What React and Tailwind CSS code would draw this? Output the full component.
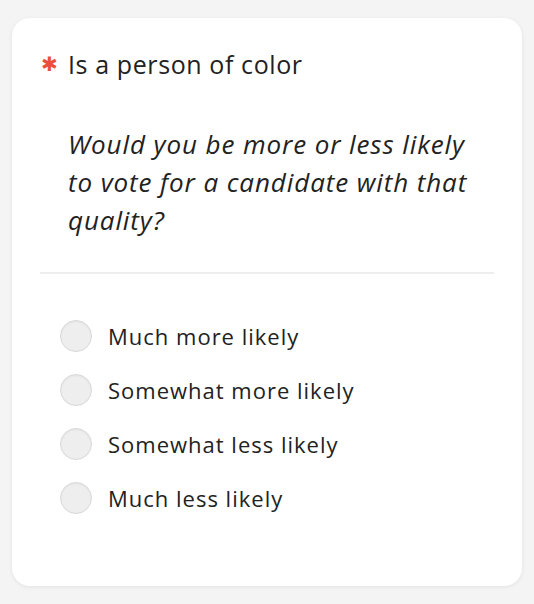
import React from 'react';

const options = ['Much more likely', 'Somewhat more likely', 'Somewhat less likely', 'Much less likely'];

export default function App() {
  return (
    <div className="min-h-[604px] w-[534px] bg-[#f4f4f4] pt-[18px] px-3 pb-[18px]" style={{ fontFamily: '"Open Sans", "Noto Sans", sans-serif' }}>
      <div className="bg-white rounded-[18px] shadow-[0_1px_4px_rgba(0,0,0,0.08)] h-[568px] px-7 pt-[30px]">
        <div className="flex items-center text-[#222] text-[25px] leading-[30px] tracking-[0.6px]">
          <span className="text-[#e8503a] text-[20px] w-[28px] pl-[1px] mt-[1px]" style={{ fontFamily: '"DejaVu Sans", sans-serif' }}>✱</span>
          <span>Is a person of color</span>
        </div>
        <p className="mt-[46px] ml-[28px] w-[412px] italic text-[26px] leading-[38px] text-[#222] tracking-[0.9px]">
          Would you be more or less likely to vote for a candidate with that quality?
        </p>
        <div className="mt-[33px] h-[2px] bg-[#eeeeee]" />
        <div className="mt-[47px] flex flex-col gap-[24px] pl-[20px]">
          {options.map((o) => (
            <label key={o} className="flex items-center gap-[16px] h-[30px]">
              <span className="w-[32px] h-[32px] rounded-full bg-[#eeeeee] border border-[#d9d9d9] shadow-[inset_0_1px_2px_rgba(0,0,0,0.05)]" />
              <span className="text-[22px] tracking-[1px] text-[#222]">{o}</span>
            </label>
          ))}
        </div>
      </div>
    </div>
  );
}
